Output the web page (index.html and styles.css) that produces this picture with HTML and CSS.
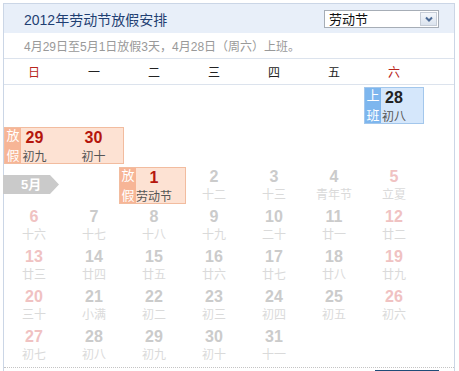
FILE: index.html
```html
<!DOCTYPE html>
<html lang="zh-CN">
<head>
<meta charset="utf-8">
<title>2012年劳动节放假安排</title>
<link rel="stylesheet" href="styles.css">
</head>
<body>
<div class="cal">
  <div class="head">
    <span class="title">2012年劳动节放假安排</span>
    <div class="select">
      <span class="sel-text">劳动节</span>
      <span class="arrow"><svg width="10" height="8" viewBox="0 0 10 8"><path d="M2 2.5 L5 5.5 L8 2.5" fill="none" stroke="#4d6b95" stroke-width="2"/></svg></span>
    </div>
  </div>
  <div class="sub">4月29日至5月1日放假3天，4月28日（周六）上班。</div>
  <div class="week">
    <span class="we">日</span><span>一</span><span>二</span><span>三</span><span>四</span><span>五</span><span class="we">六</span>
  </div>
  <div class="body">
    <div class="grid">
      <div class="box work c7">
        <div class="tag"><span>上</span><span>班</span></div>
        <div class="cell"><span class="n">28</span><span class="l">初八</span></div>
      </div>
      <div class="box rest c1s2">
        <div class="tag"><span>放</span><span>假</span></div>
        <div class="cell"><span class="n">29</span><span class="l">初九</span></div>
        <div class="cell"><span class="n">30</span><span class="l">初十</span></div>
      </div>
      <div class="mon">5月</div>
      <div class="box rest c3 wide">
        <div class="tag"><span>放</span><span>假</span></div>
        <div class="cell"><span class="n">1</span><span class="l">劳动节</span></div>
      </div>
      <div class="day"><span class="n">2</span><span class="l">十二</span></div>
      <div class="day"><span class="n">3</span><span class="l">十三</span></div>
      <div class="day"><span class="n">4</span><span class="l">青年节</span></div>
      <div class="day wkd"><span class="n">5</span><span class="l">立夏</span></div>
      <div class="day wkd"><span class="n">6</span><span class="l">十六</span></div>
      <div class="day"><span class="n">7</span><span class="l">十七</span></div>
      <div class="day"><span class="n">8</span><span class="l">十八</span></div>
      <div class="day"><span class="n">9</span><span class="l">十九</span></div>
      <div class="day"><span class="n">10</span><span class="l">二十</span></div>
      <div class="day"><span class="n">11</span><span class="l">廿一</span></div>
      <div class="day wkd"><span class="n">12</span><span class="l">廿二</span></div>
      <div class="day wkd"><span class="n">13</span><span class="l">廿三</span></div>
      <div class="day"><span class="n">14</span><span class="l">廿四</span></div>
      <div class="day"><span class="n">15</span><span class="l">廿五</span></div>
      <div class="day"><span class="n">16</span><span class="l">廿六</span></div>
      <div class="day"><span class="n">17</span><span class="l">廿七</span></div>
      <div class="day"><span class="n">18</span><span class="l">廿八</span></div>
      <div class="day wkd"><span class="n">19</span><span class="l">廿九</span></div>
      <div class="day wkd"><span class="n">20</span><span class="l">三十</span></div>
      <div class="day"><span class="n">21</span><span class="l">小满</span></div>
      <div class="day"><span class="n">22</span><span class="l">初二</span></div>
      <div class="day"><span class="n">23</span><span class="l">初三</span></div>
      <div class="day"><span class="n">24</span><span class="l">初四</span></div>
      <div class="day"><span class="n">25</span><span class="l">初五</span></div>
      <div class="day wkd"><span class="n">26</span><span class="l">初六</span></div>
      <div class="day wkd"><span class="n">27</span><span class="l">初七</span></div>
      <div class="day"><span class="n">28</span><span class="l">初八</span></div>
      <div class="day"><span class="n">29</span><span class="l">初九</span></div>
      <div class="day"><span class="n">30</span><span class="l">初十</span></div>
      <div class="day"><span class="n">31</span><span class="l">十一</span></div>
    </div>
  </div>
  <div class="foot"><button class="btn" type="button"></button></div>
</div>
</body>
</html>
```

FILE: styles.css
```css
* { box-sizing: border-box; }
body {
  margin: 0;
  background: #fff;
  font-family: "Liberation Sans", "Noto Sans CJK SC", sans-serif;
}
.cal {
  margin: 3px 0 0 3px;
  width: 452px;
  border: 1px solid #cbd6e6;
  border-bottom: none;
}
.head {
  height: 29px;
  background: #e8eff9;
  display: flex;
  align-items: center;
  justify-content: space-between;
  padding: 0 15px 0 20px;
}
.title {
  font-size: 14px;
  color: #1f3f73;
}
.select {
  width: 115px;
  height: 18px;
  border: 1px solid #a6adb6;
  background: #fff;
  display: flex;
  align-items: center;
  padding-left: 4px;
  font-size: 13px;
  color: #111;
}
.sel-text { flex: 1; }
.arrow {
  width: 17px;
  height: 14px;
  margin-right: 1px;
  border: 1px solid #c6cdd7;
  background: linear-gradient(#f4f7fb, #dbe3ee);
  display: flex;
  align-items: center;
  justify-content: center;
}
.sub {
  height: 26px;
  border-bottom: 1px solid #dce3ed;
  padding-left: 20px;
  font-size: 12px;
  color: #999;
  display: flex;
  align-items: center;
}
.week {
  display: grid;
  grid-template-columns: repeat(7, 60px);
  height: 26px;
  border-bottom: 1px solid #dce3ed;
  align-items: center;
  text-align: center;
  font-size: 12px;
  color: #222;
}
.week .we { color: #b8261d; }
.body {
  padding-bottom: 2px;
  border-bottom: 1px dotted #c4c4c4;
}
.grid {
  display: grid;
  grid-template-columns: repeat(7, 60px);
  grid-auto-rows: 40px;
}
.day, .cell {
  display: flex;
  flex-direction: column;
  align-items: center;
}
.n {
  font-size: 16px;
  font-weight: bold;
  line-height: 18px;
  margin-top: 3px;
  color: #cbcbcb;
}
.l {
  font-size: 12px;
  line-height: 16px;
  margin-top: 1px;
  color: #dadada;
  white-space: nowrap;
}
.day.wkd .n { color: #f0c2c2; }
.box {
  position: relative;
  margin-top: 2px;
  height: 37px;
  border: 1px solid;
  display: grid;
  grid-auto-flow: column;
  grid-auto-columns: 1fr;
}
.box .n { margin-top: 1px; }
.box .l { margin-top: 2px; color: #555; }
.box .tag {
  position: absolute;
  left: 0;
  top: 0;
  bottom: 0;
  width: 16px;
  display: flex;
  flex-direction: column;
  justify-content: center;
  align-items: center;
  color: #fff;
  font-size: 13px;
  line-height: 20px;
}
.box.rest { background: #fde2d3; border-color: #f2bc9f; }
.box.rest .tag { background: #f7b596; }
.box.rest .n { color: #b5160c; }
.box.work { background: #d5e7fb; border-color: #a3c7ec; }
.box.work .tag { background: #7db6ee; }
.box.work .n { color: #222; }
.c7 { grid-column: 7; }
.c1s2 { grid-column: 1 / span 2; }
.c3 { grid-column: 3; }
.box.wide {
  margin-left: -5px;
  margin-right: -2px;
  padding-left: 3px;
}
.mon {
  grid-column: 1;
  align-self: start;
  margin-top: 10px;
  margin-left: -1px;
  width: 56px;
  height: 19px;
  background: #cacaca;
  clip-path: polygon(0 0, 47px 0, 56px 50%, 47px 100%, 0 100%);
  color: #fff;
  font-weight: bold;
  font-size: 13px;
  line-height: 19px;
  padding-left: 18px;
}
.foot {
  display: flex;
  justify-content: flex-end;
  padding: 2px 15px 0 0;
}
.btn {
  width: 64px;
  height: 22px;
  border: 1px solid #1f4c78;
  background: #2e5d8c;
  padding: 0;
}
```
